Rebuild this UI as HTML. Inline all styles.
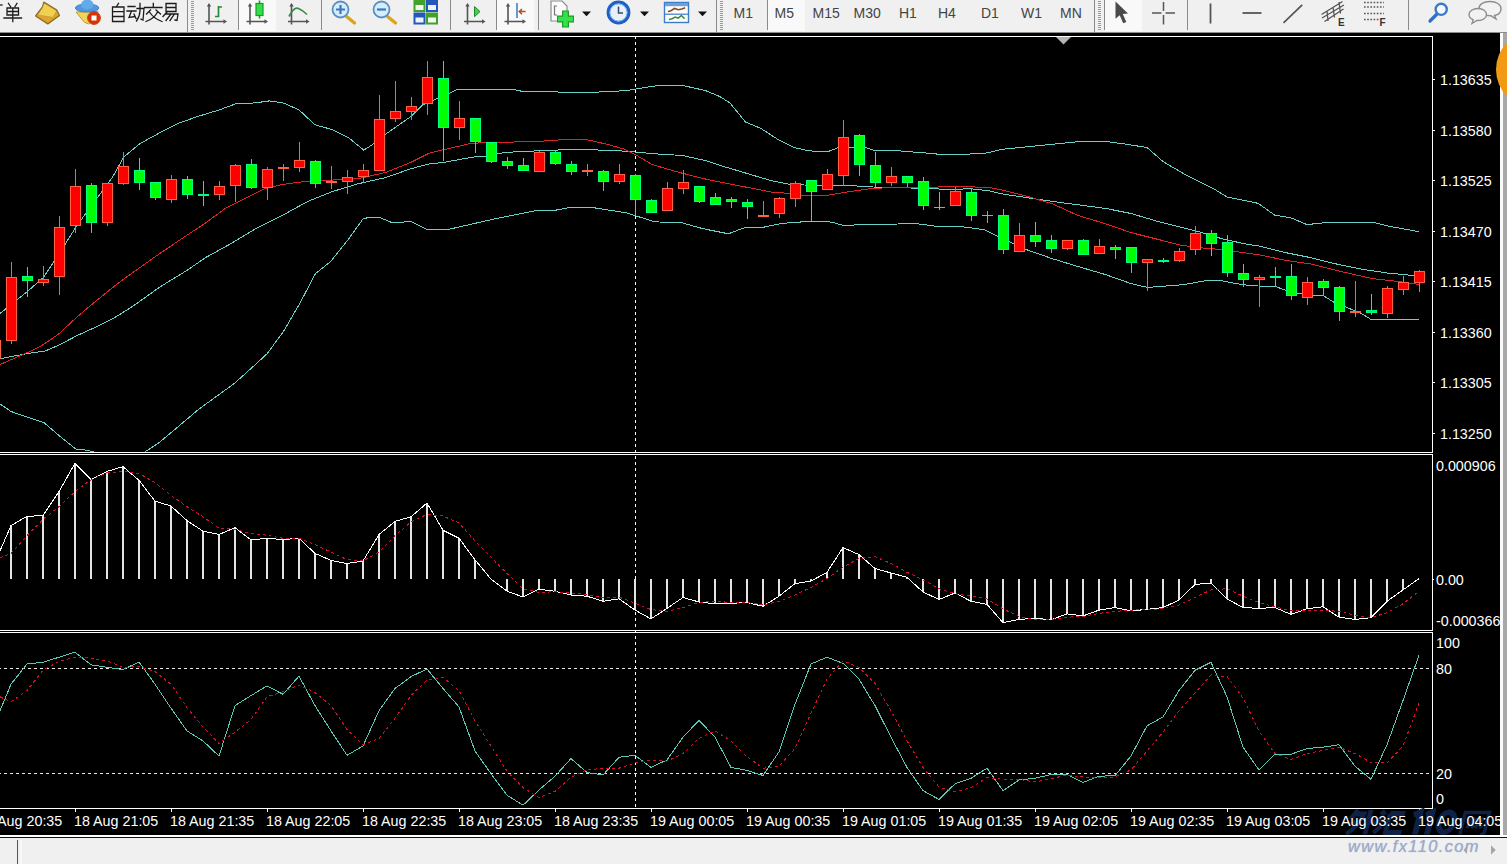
<!DOCTYPE html>
<html lang="en">
<head>
<meta charset="utf-8">
<title>MetaTrader chart - EURUSD M5</title>
<style>
html,body{margin:0;padding:0;}
body{width:1507px;height:864px;overflow:hidden;position:relative;background:#f0f0f0;font-family:"Liberation Sans",sans-serif;}
#root{position:absolute;left:0;top:0;width:1507px;height:864px;overflow:hidden;background:#f0f0f0;}
.lb{position:absolute;color:#fff;font-size:14.3px;line-height:16px;white-space:nowrap;font-family:"Liberation Sans",sans-serif;}
.tf{position:absolute;top:5px;color:#444;font-size:14px;line-height:16px;white-space:nowrap;font-family:"Liberation Sans",sans-serif;}
.el{position:absolute;color:#333;font-size:10px;font-weight:bold;line-height:10px;font-family:"Liberation Sans",sans-serif;}
#labels{position:absolute;left:0;top:0;width:1500px;height:835px;overflow:hidden;}
#status{position:absolute;left:0;top:838px;width:1507px;height:26px;background:#f0f0f0;}
#wm{position:absolute;left:1348px;top:836px;font-size:16.500px;line-height:20px;font-style:italic;color:#9eaac9;letter-spacing:1.35px;text-shadow:0 0 1px #a8b3cf;font-family:"Liberation Sans",sans-serif;white-space:nowrap;}
</style>
</head>
<body>
<div id="root">
<svg id="tb" width="1507" height="33" viewBox="0 0 1507 33" style="position:absolute;left:0;top:0">
<rect x="0" y="0" width="1507" height="32" fill="#f0f0f0"/>
<rect x="0" y="32" width="1507" height="1" fill="#8c8c8c"/>
<!-- pressed button backgrounds -->
<g fill="#f9f9f9">
<rect x="239" y="0" width="37" height="31"/>
<rect x="497" y="0" width="37" height="31"/>
<rect x="768" y="0" width="37" height="31"/>
<rect x="1105" y="0" width="37" height="31"/>
</g>
<!-- separators -->
<g fill="#8a8a8a" shape-rendering="crispEdges">
<rect x="187" y="0" width="1" height="32"/>
<rect x="238" y="0" width="1" height="30"/>
<rect x="321" y="0" width="1" height="30"/>
<rect x="450" y="0" width="1" height="30"/>
<rect x="496" y="0" width="1" height="30"/>
<rect x="538" y="0" width="1" height="30"/>
<rect x="716" y="0" width="1" height="32"/>
<rect x="767" y="0" width="1" height="30"/>
<rect x="1094" y="0" width="1" height="32"/>
<rect x="1104" y="0" width="1" height="30"/>
<rect x="1187" y="0" width="1" height="30"/>
<rect x="1408" y="0" width="1" height="30"/>
</g>
<!-- grips -->
<g stroke="#9a9a9a" stroke-width="3" stroke-dasharray="1,1" shape-rendering="crispEdges">
<line x1="192.5" y1="1" x2="192.5" y2="30"/>
<line x1="721.5" y1="1" x2="721.5" y2="30"/>
<line x1="1099.5" y1="1" x2="1099.5" y2="30"/>
</g>
<!-- chinese: 单 (partial) -->
<g fill="none" stroke="#1c1c1c" stroke-width="1.300" stroke-linecap="square">
<path d="M0 5h2"/>
<g transform="translate(4,3.5)">
<path d="M4.5 0l2 3M13 0l-2 3M3 4.5h11.500v7h-11.500zM3 8h11.500M0 14.500h17.500M8.800 4.500v13.500"/>
</g>
<!-- 自动交易 -->
<g transform="translate(109.500,3.500)">
<path d="M9 0l-2 3M3 3.500h11.500v14.500h-11.500zM3 8.200h11.500M3 13h11.500"/>
</g>
<g transform="translate(127,3.500)">
<path d="M1 3h7M0 7.500h9M4.500 7.500l-2.500 6.500 6-1M7 10.500l2 4.500M10 5h7l-1 11.500-2-.8M13 0v7.500q-.4 6-3.500 10"/>
</g>
<g transform="translate(144.500,3.500)">
<path d="M8.800 0v2.500M0 4h17.500M6 6.500l-4 4M11.500 6.500l4.500 4M13 8.500q-3 6.500-11.500 9.500M5 8.500q4 6.500 12.500 9.500"/>
</g>
<g transform="translate(162,3.500)">
<path d="M4 0h10v8h-10zM4 4h10M5.500 8l-4.500 5M4 10.500h12l-1 6.500-2-.5M9 10.500l-5 6.500M12.500 10.500l-4.500 6.500"/>
</g>
</g>
<!-- gold tag icon -->
<g>
<polygon points="43.800,2.100 56.800,10.100 59.500,15.400 47.800,23.900 35.600,15.900 42.500,6.900" fill="#c8962a" stroke="#8a6a22" stroke-width="1.200" stroke-linejoin="round"/>
<polygon points="44.300,3.400 56.300,11.100 52.600,17 38.200,14.800 42.800,7.400" fill="#f0d050"/>
<polygon points="38.200,15.200 52.600,17.400 56.600,11.600 58.300,15.300 47.800,22.600 36.800,15.800" fill="#dca62e"/>
</g>
<!-- autotrading icon -->
<g>
<polygon points="76,12 98.200,11.700 95,18 88.700,23.900 84.400,22.300" fill="#f3d25a" stroke="#c79a2e" stroke-width="1"/>
<ellipse cx="87.100" cy="8" rx="11.700" ry="4" fill="#4f9ade" stroke="#3b7cc4" stroke-width="1"/>
<ellipse cx="87.300" cy="4.500" rx="6.200" ry="5" fill="#62abe8"/>
<circle cx="94" cy="18" r="6.400" fill="#d8300e"/>
<circle cx="94" cy="18" r="6.400" fill="none" stroke="#c8460e" stroke-width="1"/>
<rect x="91.500" y="15.500" width="5" height="5" fill="#fff"/>
</g>
<!-- chart type icons: axes helper -->
<g stroke="#555" stroke-width="1.600" fill="#555">
<!-- bar -->
<path d="M209 4.500v20M205.500 21.500h19" fill="none"/>
<polygon points="209,3 206.800,6.500 211.200,6.500" stroke="none"/><polygon points="227,21.500 223.500,19.300 223.500,23.700" stroke="none"/>
<!-- candle -->
<path d="M250 4.500v20M246.500 21.500h19" fill="none"/>
<polygon points="250,3 247.800,6.500 252.200,6.500" stroke="none"/><polygon points="268,21.500 264.500,19.300 264.500,23.700" stroke="none"/>
<!-- line -->
<path d="M291.500 4.500v20M288 21.500h19" fill="none"/>
<polygon points="291.500,3 289.300,6.500 293.700,6.500" stroke="none"/><polygon points="309.500,21.500 306,19.300 306,23.700" stroke="none"/>
<!-- autoscroll -->
<path d="M467.500 4.500v20M464 21.500h19" fill="none"/>
<polygon points="467.500,3 465.300,6.500 469.700,6.500" stroke="none"/><polygon points="485.500,21.500 482,19.300 482,23.700" stroke="none"/>
<!-- shift -->
<path d="M508 4.500v20M504.500 21.500h19" fill="none"/>
<polygon points="508,3 505.800,6.500 510.200,6.500" stroke="none"/><polygon points="526,21.500 522.500,19.300 522.500,23.700" stroke="none"/>
</g>
<path d="M215 16.500h3.500v-10.500M218.500 7h3.500" fill="none" stroke="#2a8a3c" stroke-width="1.700"/>
<path d="M259.500 .5v18" stroke="#1c9a2c" stroke-width="1.600"/>
<rect x="256" y="3.500" width="7" height="12" fill="#34e04a" stroke="#1c9a2c" stroke-width="1.200"/>
<path d="M289 16.500q5 -10 9.500 -8t8.500 6" fill="none" stroke="#3a8a4c" stroke-width="1.700"/>
<polygon points="474.500,6.500 480,11.600 474.500,16.700" fill="#3bd44a" stroke="#238a30" stroke-width="1"/>
<path d="M517 3v15" stroke="#3a84c8" stroke-width="1.600"/>
<path d="M525.500 11.600h-6M522 9l-2.800 2.600 2.800 2.600" fill="none" stroke="#c04a18" stroke-width="1.500"/>
<!-- zoom in / out -->
<g>
<path d="M346.500 16.500l8 6.500" stroke="#d9a520" stroke-width="3.400" stroke-linecap="round"/>
<circle cx="340.500" cy="9.500" r="8" fill="#d6ecfa" stroke="#5b8fc2" stroke-width="1.800"/>
<path d="M336 9.500h9M340.500 5v9" stroke="#3a78bc" stroke-width="2.200"/>
<path d="M387.500 16.500l8 6.500" stroke="#d9a520" stroke-width="3.400" stroke-linecap="round"/>
<circle cx="381.500" cy="9.500" r="8" fill="#d6ecfa" stroke="#5b8fc2" stroke-width="1.800"/>
<path d="M377 9.500h9" stroke="#3a78bc" stroke-width="2.200"/>
</g>
<!-- tile windows -->
<g>
<rect x="413.500" y="0" width="12" height="12" fill="#3fa22a"/><rect x="426" y="0" width="12" height="12" fill="#2357b8"/>
<rect x="413.500" y="12.500" width="12" height="12" fill="#2357b8"/><rect x="426" y="12.500" width="12" height="12" fill="#3fa22a"/>
<rect x="415.500" y="5" width="8" height="5" fill="#f4f8ee"/><rect x="428" y="5" width="8" height="5" fill="#eef2fb"/>
<rect x="415.500" y="17.500" width="8" height="5" fill="#eef2fb"/><rect x="428" y="17.500" width="8" height="5" fill="#f4f8ee"/>
</g>
<!-- new chart doc+plus -->
<g>
<path d="M551 1h11l5 5v15h-16z" fill="#fbfbfb" stroke="#8c8c8c" stroke-width="1.200"/>
<path d="M557 6h-2.500v9h2.500" fill="none" stroke="#777" stroke-width="1.200"/>
<path d="M565.500 10.500v17M557 19h17" stroke="#1f9a2a" stroke-width="7"/>
<path d="M565.500 11.500v15M558 19h15" stroke="#35e04a" stroke-width="4.600"/>
</g>
<g fill="#111">
<polygon points="582,11.500 591,11.500 586.500,16.200"/>
<polygon points="640,11.500 649,11.500 644.500,16.200"/>
<polygon points="698,11.500 707,11.500 702.500,16.200"/>
</g>
<!-- clock -->
<g>
<circle cx="618.500" cy="12.500" r="10.400" fill="#e8f1fb" stroke="#1e5fc0" stroke-width="3"/>
<circle cx="618.500" cy="12.500" r="8.600" fill="none" stroke="#6aa6ec" stroke-width="1"/>
<path d="M618.500 6.500v6.500h4.500" fill="none" stroke="#3a4a60" stroke-width="1.500"/>
</g>
<!-- template icon -->
<g>
<rect x="664.500" y="2.500" width="24" height="20" fill="#fdfdfd" stroke="#3d7cc8" stroke-width="1.400"/>
<rect x="665" y="3" width="23" height="3.200" fill="#6aa0dc"/>
<path d="M665 14.200h23" stroke="#3d7cc8" stroke-width="1.200"/>
<path d="M668 11.500l3-.8 3.500-2.300 3.800 1.300 3.600-.7 3.200-1.300" fill="none" stroke="#8a4a1c" stroke-width="1.600"/>
<path d="M669 19.500l3.200-.8 3-1.600 3 1 3.200-2.600 3.200 3.200" fill="none" stroke="#3a8a3a" stroke-width="1.500"/>
</g>
<!-- cursor -->
<polygon points="1115.500,1.500 1115.500,18.800 1119.700,15.300 1123.200,23.300 1126.300,22 1122.800,14 1128,13.400" fill="#4a4a4a"/>
<!-- crosshair -->
<path d="M1163.500 2v9M1163.500 15v9.500M1152 13h9.500M1165.500 13h9.500" stroke="#555" stroke-width="1.500" fill="none"/>
<!-- vline hline trendline -->
<path d="M1210.500 3.500v20" stroke="#555" stroke-width="1.800"/>
<path d="M1242.500 13h19" stroke="#555" stroke-width="1.800"/>
<path d="M1283.500 22.800l18.700-18" stroke="#555" stroke-width="1.700"/>
<!-- channel E -->
<g stroke="#555" stroke-width="1.300" fill="none">
<path d="M1321.500 14.500l21-13M1324.500 21.500l19-12.500M1327 11l1 10M1333 7l1.500 10.500M1339 2l1.500 11.500M1322 18l22-13"/>
</g>
<!-- fibo F -->
<g stroke="#555" stroke-width="1.400" stroke-dasharray="1.600,1.600">
<path d="M1364 2.500h20M1364 7h20M1364 13.500h20M1364 19.500h15"/>
</g>
<!-- blue magnifier -->
<path d="M1437 14l-7 7" stroke="#2f6fc4" stroke-width="3.200" stroke-linecap="round"/>
<circle cx="1441.200" cy="9.300" r="5.600" fill="#f4f8fd" stroke="#3a7acc" stroke-width="2.400"/>
<!-- speech bubbles -->
<g fill="#f2f2f2" stroke="#8e8e8e" stroke-width="1.400">
<path d="M1490 1.500c6.500 0 11 3 11 7.200s-3 6-6.500 6.800l1.500 3.500-5-3.200c-7 0-12-2.500-12-7.100s4.500-7.200 11-7.200z"/>
<path d="M1478 8.500c5 0 8.500 2.600 8.500 6s-3.500 6-8.500 6l-1.200 0-4.800 3 1.200-3.800c-2.400-1-4.200-2.800-4.200-5.200 0-3.400 4-6 9-6z"/>
</g>
</svg>

<div class="tf" style="left:733.500px">M1</div>
<div class="tf" style="left:774.500px">M5</div>
<div class="tf" style="left:812.500px">M15</div>
<div class="tf" style="left:853.500px">M30</div>
<div class="tf" style="left:899px">H1</div>
<div class="tf" style="left:938px">H4</div>
<div class="tf" style="left:981px">D1</div>
<div class="tf" style="left:1021px">W1</div>
<div class="tf" style="left:1060px">MN</div>
<div class="el" style="left:1338px;top:17.500px">E</div>
<div class="el" style="left:1379.500px;top:17.500px">F</div>
<svg id="chart" width="1507" height="864" viewBox="0 0 1507 864" style="position:absolute;left:0;top:0">
<rect x="0" y="33" width="1500" height="802" fill="#000"/>
<defs><clipPath id="cm"><rect x="0" y="37" width="1432" height="415"/></clipPath><clipPath id="c2"><rect x="0" y="455" width="1432" height="175"/></clipPath><clipPath id="c3"><rect x="0" y="633" width="1432" height="175"/></clipPath></defs>
<g fill="#fff" shape-rendering="crispEdges">
<rect x="0" y="36" width="1433" height="1"/>
<rect x="1432" y="36" width="1" height="417"/>
<rect x="0" y="452" width="1433" height="1"/>
<rect x="0" y="454" width="1433" height="1"/>
<rect x="1432" y="454" width="1" height="177"/>
<rect x="0" y="630" width="1433" height="1"/>
<rect x="0" y="632" width="1433" height="1"/>
<rect x="1432" y="632" width="1" height="177"/>
<rect x="0" y="808" width="1433" height="1"/>
<rect x="1433" y="79" width="2" height="1"/>
<rect x="1433" y="130" width="2" height="1"/>
<rect x="1433" y="180" width="2" height="1"/>
<rect x="1433" y="231" width="2" height="1"/>
<rect x="1433" y="281" width="2" height="1"/>
<rect x="1433" y="332" width="2" height="1"/>
<rect x="1433" y="382" width="2" height="1"/>
<rect x="1433" y="433" width="2" height="1"/>
<rect x="1433" y="579" width="1" height="1"/>
<rect x="75" y="809" width="1" height="3"/>
<rect x="171" y="809" width="1" height="3"/>
<rect x="267" y="809" width="1" height="3"/>
<rect x="363" y="809" width="1" height="3"/>
<rect x="459" y="809" width="1" height="3"/>
<rect x="555" y="809" width="1" height="3"/>
<rect x="651" y="809" width="1" height="3"/>
<rect x="747" y="809" width="1" height="3"/>
<rect x="843" y="809" width="1" height="3"/>
<rect x="939" y="809" width="1" height="3"/>
<rect x="1035" y="809" width="1" height="3"/>
<rect x="1131" y="809" width="1" height="3"/>
<rect x="1227" y="809" width="1" height="3"/>
<rect x="1323" y="809" width="1" height="3"/>
<rect x="1419" y="809" width="1" height="3"/>
</g>
<polygon points="1056,37 1071,37 1063.5,44.5" fill="#b4b4b4"/>
<line x1="635.5" y1="36" x2="635.5" y2="808" stroke="#fff" stroke-width="1" stroke-dasharray="3,3" shape-rendering="crispEdges"/>
<g transform="translate(1349,810) skewX(-14)" fill="none" stroke="#0f2146" stroke-width="4.800" stroke-linecap="butt" stroke-linejoin="miter">
<path d="M9 0l-5 9M8 4h8q-3 13-13 20M6 11l6 6M22 0v24.500M22 9l8 5"/>
<g transform="translate(29,0)"><path d="M4 1l4 4M2 8l4 4M1 23l6-7M13 3.500h15M13 3.500v19h16"/></g>
<g transform="translate(66,0)"><path d="M0 5l6-3v22.500" stroke-width="6"/></g>
<g transform="translate(78,0)"><path d="M0 5l6-3v22.500" stroke-width="6"/></g>
<g transform="translate(90,0)"><ellipse cx="10.500" cy="12.300" rx="7.500" ry="10" stroke-width="5.500"/></g>
<g transform="translate(115,0)"><path d="M2 24.500v-22h24v19q0 3-4 3M7 8l7 10M14 8l-7 10M15 8l7 10M22 8l-7 10" stroke-width="3.600"/></g>
</g>
<g clip-path="url(#cm)" fill="none" stroke-width="1" shape-rendering="crispEdges">
<polyline points="0.0,313.5 27.5,291.4 43.5,277.4 58.6,254.5 76.4,226.4 96.8,198.4 112.0,178.0 124.0,156.8 139.8,143.7 159.7,132.8 179.6,122.8 199.5,115.9 219.4,109.9 235.4,103.9 255.3,102.9 269.2,100.9 283.1,102.9 299.0,109.9 315.0,124.8 332.9,129.8 348.8,137.8 363.8,150.2 372.7,144.5 385.5,134.3 411.0,116.4 422.4,105.0 449.0,93.5 458.0,89.2 513.0,89.2 520.5,91.0 540.0,91.0 565.5,92.4 591.0,92.4 626.6,90.6 654.6,86.0 682.7,85.5 705.6,90.6 720.0,96.6 730.0,103.0 745.5,122.0 760.8,128.4 778.6,139.9 793.9,147.5 809.0,150.8 827.0,152.0 838.5,147.5 865.0,147.5 873.0,150.0 898.0,150.8 925.5,153.0 940.8,154.4 963.7,154.4 986.6,153.0 1002.0,149.3 1040.0,145.5 1083.0,141.2 1104.0,141.2 1124.0,143.9 1147.0,147.5 1163.0,161.5 1186.0,175.1 1213.0,188.3 1227.0,197.0 1258.0,203.3 1275.0,215.3 1290.6,217.7 1307.0,224.6 1331.0,222.0 1372.0,222.0 1387.4,225.9 1419.0,231.7" stroke="#68d2ca"/>
<polyline points="0.0,358.7 30.0,353.1 40.0,351.8 44.6,351.3 58.5,345.3 77.0,335.6 95.6,327.2 114.0,318.0 132.6,306.4 160.0,286.9 187.6,270.0 205.5,257.6 231.0,243.6 256.4,228.3 282.0,215.6 307.4,201.6 332.9,191.4 358.0,183.8 385.5,177.6 411.0,168.7 428.8,164.0 444.0,162.3 472.0,157.2 487.0,156.0 497.6,153.4 513.0,152.0 538.0,150.8 565.5,149.7 591.0,149.7 626.6,151.2 654.6,153.8 682.7,155.5 705.6,160.6 720.0,165.4 745.5,173.0 771.0,180.6 790.0,184.5 804.0,185.0 832.0,185.7 852.5,185.7 873.0,187.0 898.0,187.5 930.6,188.8 951.0,189.3 971.0,188.8 989.0,190.8 1002.0,193.9 1027.4,197.7 1053.0,201.5 1078.0,204.8 1105.5,208.4 1131.0,213.5 1156.4,221.0 1182.0,227.5 1202.0,232.6 1222.7,239.0 1245.6,244.0 1260.0,246.2 1285.5,252.6 1311.0,257.7 1336.4,264.0 1362.0,269.2 1387.4,273.0 1413.0,275.5 1419.0,275.5" stroke="#68d2ca"/>
<polyline points="0.0,403.9 11.0,411.5 27.0,417.0 43.8,422.5 59.0,435.5 75.6,449.0 87.6,450.3 93.0,451.7 100.0,454.0 140.0,455.0 145.3,451.7 159.3,442.4 174.0,430.2 199.0,409.0 234.2,383.6 251.0,368.5 267.3,353.5 283.8,330.9 300.4,302.3 315.4,273.7 330.5,261.7 348.5,239.1 363.6,218.1 380.0,217.6 393.0,223.0 411.0,221.4 427.5,229.8 446.6,229.8 472.0,224.0 497.6,218.3 538.0,210.3 555.0,210.3 570.6,207.3 591.0,207.3 626.6,212.9 654.6,221.8 682.7,223.0 703.0,228.7 728.5,233.8 745.5,227.3 760.8,227.8 778.6,224.0 793.9,222.2 822.0,221.4 832.0,222.2 842.3,225.2 873.0,224.7 898.0,224.0 912.7,223.2 938.0,226.5 963.7,227.0 984.0,229.6 996.8,235.9 1027.4,250.0 1053.0,258.9 1078.0,266.5 1105.5,274.6 1131.0,283.6 1147.5,287.4 1182.0,284.8 1207.4,280.5 1222.7,281.0 1243.0,284.8 1258.0,286.0 1275.3,286.5 1290.6,292.0 1307.0,294.6 1323.7,295.9 1334.0,302.3 1346.6,307.4 1362.0,313.8 1371.0,319.4 1419.0,319.4" stroke="#68d2ca"/>
<polyline points="0.0,364.5 32.4,350.4 40.0,346.7 58.5,334.2 77.0,317.0 95.6,301.3 114.0,286.5 122.4,280.0 152.9,258.3 180.0,239.8 205.5,223.0 225.9,208.0 243.7,199.0 264.0,188.9 282.0,184.5 307.4,181.2 332.9,180.0 358.0,178.7 385.5,172.5 411.0,162.3 428.8,153.4 444.0,149.6 472.0,143.2 497.6,142.4 538.0,141.4 565.5,139.5 585.9,139.5 606.0,144.0 624.0,149.0 636.8,155.5 652.0,164.5 677.6,172.0 703.0,178.5 720.0,182.0 745.5,187.0 771.0,192.0 788.8,193.4 806.6,196.0 827.0,195.4 847.4,192.0 873.0,188.3 898.0,187.5 930.6,187.5 951.0,186.2 989.0,187.5 1002.0,190.0 1027.4,196.4 1053.0,204.0 1078.0,215.5 1105.5,223.7 1131.0,232.6 1156.4,239.0 1182.0,245.4 1202.0,247.9 1222.7,249.7 1245.6,253.0 1260.0,255.0 1285.5,260.3 1311.0,264.0 1336.4,270.4 1362.0,276.3 1374.6,278.9 1397.6,281.4 1419.0,284.5" stroke="#dc2428"/>
</g>
<g clip-path="url(#cm)" shape-rendering="crispEdges">
<rect x="-5" y="339" width="1" height="20" fill="#ff6347"/>
<rect x="-10" y="340" width="11" height="19" fill="#ff6347"/>
<rect x="-9" y="341" width="9" height="17" fill="#ff0000"/>
<rect x="11" y="262" width="1" height="82" fill="#ff6347"/>
<rect x="6" y="277" width="11" height="64" fill="#ff6347"/>
<rect x="7" y="278" width="9" height="62" fill="#ff0000"/>
<rect x="27" y="267" width="1" height="30" fill="#00ff7f"/>
<rect x="22" y="276" width="11" height="5" fill="#00ff7f"/>
<rect x="23" y="277" width="9" height="3" fill="#00ff00"/>
<rect x="43" y="266" width="1" height="20" fill="#ff6347"/>
<rect x="38" y="279" width="11" height="4" fill="#ff6347"/>
<rect x="39" y="280" width="9" height="2" fill="#ff0000"/>
<rect x="59" y="216" width="1" height="79" fill="#ff6347"/>
<rect x="54" y="227" width="11" height="50" fill="#ff6347"/>
<rect x="55" y="228" width="9" height="48" fill="#ff0000"/>
<rect x="75" y="169" width="1" height="64" fill="#ff6347"/>
<rect x="70" y="186" width="11" height="40" fill="#ff6347"/>
<rect x="71" y="187" width="9" height="38" fill="#ff0000"/>
<rect x="91" y="183" width="1" height="50" fill="#00ff7f"/>
<rect x="86" y="185" width="11" height="38" fill="#00ff7f"/>
<rect x="87" y="186" width="9" height="36" fill="#00ff00"/>
<rect x="107" y="183" width="1" height="43" fill="#ff6347"/>
<rect x="102" y="183" width="11" height="40" fill="#ff6347"/>
<rect x="103" y="184" width="9" height="38" fill="#ff0000"/>
<rect x="123" y="152" width="1" height="33" fill="#ff6347"/>
<rect x="118" y="166" width="11" height="18" fill="#ff6347"/>
<rect x="119" y="167" width="9" height="16" fill="#ff0000"/>
<rect x="139" y="158" width="1" height="32" fill="#00ff7f"/>
<rect x="134" y="170" width="11" height="13" fill="#00ff7f"/>
<rect x="135" y="171" width="9" height="11" fill="#00ff00"/>
<rect x="155" y="182" width="1" height="18" fill="#00ff7f"/>
<rect x="150" y="182" width="11" height="16" fill="#00ff7f"/>
<rect x="151" y="183" width="9" height="14" fill="#00ff00"/>
<rect x="171" y="175" width="1" height="28" fill="#ff6347"/>
<rect x="166" y="179" width="11" height="21" fill="#ff6347"/>
<rect x="167" y="180" width="9" height="19" fill="#ff0000"/>
<rect x="187" y="176" width="1" height="23" fill="#00ff7f"/>
<rect x="182" y="179" width="11" height="16" fill="#00ff7f"/>
<rect x="183" y="180" width="9" height="14" fill="#00ff00"/>
<rect x="203" y="181" width="1" height="25" fill="#00ff7f"/>
<rect x="198" y="194" width="11" height="2" fill="#00ff7f"/>
<rect x="219" y="181" width="1" height="19" fill="#ff6347"/>
<rect x="214" y="186" width="11" height="9" fill="#ff6347"/>
<rect x="215" y="187" width="9" height="7" fill="#ff0000"/>
<rect x="235" y="164" width="1" height="38" fill="#ff6347"/>
<rect x="230" y="165" width="11" height="21" fill="#ff6347"/>
<rect x="231" y="166" width="9" height="19" fill="#ff0000"/>
<rect x="251" y="159" width="1" height="30" fill="#00ff7f"/>
<rect x="246" y="164" width="11" height="24" fill="#00ff7f"/>
<rect x="247" y="165" width="9" height="22" fill="#00ff00"/>
<rect x="267" y="167" width="1" height="33" fill="#ff6347"/>
<rect x="262" y="169" width="11" height="19" fill="#ff6347"/>
<rect x="263" y="170" width="9" height="17" fill="#ff0000"/>
<rect x="283" y="164" width="1" height="17" fill="#ff6347"/>
<rect x="278" y="167" width="11" height="2" fill="#ff6347"/>
<rect x="299" y="142" width="1" height="30" fill="#ff6347"/>
<rect x="294" y="160" width="11" height="8" fill="#ff6347"/>
<rect x="295" y="161" width="9" height="6" fill="#ff0000"/>
<rect x="315" y="160" width="1" height="28" fill="#00ff7f"/>
<rect x="310" y="161" width="11" height="23" fill="#00ff7f"/>
<rect x="311" y="162" width="9" height="21" fill="#00ff00"/>
<rect x="331" y="166" width="1" height="23" fill="#ff6347"/>
<rect x="326" y="181" width="11" height="2" fill="#ff6347"/>
<rect x="347" y="170" width="1" height="24" fill="#ff6347"/>
<rect x="342" y="177" width="11" height="5" fill="#ff6347"/>
<rect x="343" y="178" width="9" height="3" fill="#ff0000"/>
<rect x="363" y="164" width="1" height="18" fill="#ff6347"/>
<rect x="358" y="170" width="11" height="7" fill="#ff6347"/>
<rect x="359" y="171" width="9" height="5" fill="#ff0000"/>
<rect x="379" y="95" width="1" height="76" fill="#ff6347"/>
<rect x="374" y="119" width="11" height="52" fill="#ff6347"/>
<rect x="375" y="120" width="9" height="50" fill="#ff0000"/>
<rect x="395" y="81" width="1" height="41" fill="#ff6347"/>
<rect x="390" y="111" width="11" height="8" fill="#ff6347"/>
<rect x="391" y="112" width="9" height="6" fill="#ff0000"/>
<rect x="411" y="97" width="1" height="23" fill="#ff6347"/>
<rect x="406" y="106" width="11" height="6" fill="#ff6347"/>
<rect x="407" y="107" width="9" height="4" fill="#ff0000"/>
<rect x="427" y="61" width="1" height="54" fill="#ff6347"/>
<rect x="422" y="77" width="11" height="27" fill="#ff6347"/>
<rect x="423" y="78" width="9" height="25" fill="#ff0000"/>
<rect x="443" y="61" width="1" height="100" fill="#00ff7f"/>
<rect x="438" y="78" width="11" height="50" fill="#00ff7f"/>
<rect x="439" y="79" width="9" height="48" fill="#00ff00"/>
<rect x="459" y="101" width="1" height="39" fill="#ff6347"/>
<rect x="454" y="118" width="11" height="10" fill="#ff6347"/>
<rect x="455" y="119" width="9" height="8" fill="#ff0000"/>
<rect x="475" y="118" width="1" height="35" fill="#00ff7f"/>
<rect x="470" y="118" width="11" height="24" fill="#00ff7f"/>
<rect x="471" y="119" width="9" height="22" fill="#00ff00"/>
<rect x="491" y="142" width="1" height="21" fill="#00ff7f"/>
<rect x="486" y="142" width="11" height="20" fill="#00ff7f"/>
<rect x="487" y="143" width="9" height="18" fill="#00ff00"/>
<rect x="507" y="157" width="1" height="12" fill="#00ff7f"/>
<rect x="502" y="161" width="11" height="5" fill="#00ff7f"/>
<rect x="503" y="162" width="9" height="3" fill="#00ff00"/>
<rect x="523" y="158" width="1" height="13" fill="#00ff7f"/>
<rect x="518" y="165" width="11" height="6" fill="#00ff7f"/>
<rect x="519" y="166" width="9" height="4" fill="#00ff00"/>
<rect x="539" y="151" width="1" height="21" fill="#ff6347"/>
<rect x="534" y="152" width="11" height="20" fill="#ff6347"/>
<rect x="535" y="153" width="9" height="18" fill="#ff0000"/>
<rect x="555" y="151" width="1" height="14" fill="#00ff7f"/>
<rect x="550" y="152" width="11" height="12" fill="#00ff7f"/>
<rect x="551" y="153" width="9" height="10" fill="#00ff00"/>
<rect x="571" y="161" width="1" height="14" fill="#00ff7f"/>
<rect x="566" y="164" width="11" height="8" fill="#00ff7f"/>
<rect x="567" y="165" width="9" height="6" fill="#00ff00"/>
<rect x="587" y="164" width="1" height="12" fill="#ff6347"/>
<rect x="582" y="170" width="11" height="2" fill="#ff6347"/>
<rect x="603" y="170" width="1" height="21" fill="#00ff7f"/>
<rect x="598" y="171" width="11" height="11" fill="#00ff7f"/>
<rect x="599" y="172" width="9" height="9" fill="#00ff00"/>
<rect x="619" y="164" width="1" height="20" fill="#ff6347"/>
<rect x="614" y="174" width="11" height="8" fill="#ff6347"/>
<rect x="615" y="175" width="9" height="6" fill="#ff0000"/>
<rect x="635" y="174" width="1" height="41" fill="#00ff7f"/>
<rect x="630" y="175" width="11" height="25" fill="#00ff7f"/>
<rect x="631" y="176" width="9" height="23" fill="#00ff00"/>
<rect x="651" y="199" width="1" height="14" fill="#00ff7f"/>
<rect x="646" y="200" width="11" height="13" fill="#00ff7f"/>
<rect x="647" y="201" width="9" height="11" fill="#00ff00"/>
<rect x="667" y="182" width="1" height="29" fill="#ff6347"/>
<rect x="662" y="188" width="11" height="23" fill="#ff6347"/>
<rect x="663" y="189" width="9" height="21" fill="#ff0000"/>
<rect x="683" y="170" width="1" height="24" fill="#ff6347"/>
<rect x="678" y="182" width="11" height="7" fill="#ff6347"/>
<rect x="679" y="183" width="9" height="5" fill="#ff0000"/>
<rect x="699" y="186" width="1" height="17" fill="#00ff7f"/>
<rect x="694" y="186" width="11" height="16" fill="#00ff7f"/>
<rect x="695" y="187" width="9" height="14" fill="#00ff00"/>
<rect x="715" y="193" width="1" height="12" fill="#00ff7f"/>
<rect x="710" y="197" width="11" height="8" fill="#00ff7f"/>
<rect x="711" y="198" width="9" height="6" fill="#00ff00"/>
<rect x="731" y="197" width="1" height="11" fill="#00ff7f"/>
<rect x="726" y="199" width="11" height="3" fill="#00ff7f"/>
<rect x="727" y="200" width="9" height="1" fill="#00ff00"/>
<rect x="747" y="199" width="1" height="20" fill="#00ff7f"/>
<rect x="742" y="202" width="11" height="5" fill="#00ff7f"/>
<rect x="743" y="203" width="9" height="3" fill="#00ff00"/>
<rect x="763" y="201" width="1" height="16" fill="#ff6347"/>
<rect x="758" y="215" width="11" height="2" fill="#ff6347"/>
<rect x="779" y="197" width="1" height="21" fill="#ff6347"/>
<rect x="774" y="198" width="11" height="16" fill="#ff6347"/>
<rect x="775" y="199" width="9" height="14" fill="#ff0000"/>
<rect x="795" y="181" width="1" height="26" fill="#ff6347"/>
<rect x="790" y="183" width="11" height="16" fill="#ff6347"/>
<rect x="791" y="184" width="9" height="14" fill="#ff0000"/>
<rect x="811" y="180" width="1" height="41" fill="#00ff7f"/>
<rect x="806" y="180" width="11" height="12" fill="#00ff7f"/>
<rect x="807" y="181" width="9" height="10" fill="#00ff00"/>
<rect x="827" y="169" width="1" height="21" fill="#ff6347"/>
<rect x="822" y="174" width="11" height="16" fill="#ff6347"/>
<rect x="823" y="175" width="9" height="14" fill="#ff0000"/>
<rect x="843" y="120" width="1" height="66" fill="#ff6347"/>
<rect x="838" y="137" width="11" height="39" fill="#ff6347"/>
<rect x="839" y="138" width="9" height="37" fill="#ff0000"/>
<rect x="859" y="134" width="1" height="42" fill="#00ff7f"/>
<rect x="854" y="135" width="11" height="30" fill="#00ff7f"/>
<rect x="855" y="136" width="9" height="28" fill="#00ff00"/>
<rect x="875" y="152" width="1" height="35" fill="#00ff7f"/>
<rect x="870" y="165" width="11" height="18" fill="#00ff7f"/>
<rect x="871" y="166" width="9" height="16" fill="#00ff00"/>
<rect x="891" y="167" width="1" height="19" fill="#ff6347"/>
<rect x="886" y="176" width="11" height="7" fill="#ff6347"/>
<rect x="887" y="177" width="9" height="5" fill="#ff0000"/>
<rect x="907" y="176" width="1" height="11" fill="#00ff7f"/>
<rect x="902" y="176" width="11" height="7" fill="#00ff7f"/>
<rect x="903" y="177" width="9" height="5" fill="#00ff00"/>
<rect x="923" y="177" width="1" height="33" fill="#00ff7f"/>
<rect x="918" y="181" width="11" height="25" fill="#00ff7f"/>
<rect x="919" y="182" width="9" height="23" fill="#00ff00"/>
<rect x="939" y="192" width="1" height="18" fill="#00ff7f"/>
<rect x="934" y="207" width="11" height="1" fill="#00ff7f"/>
<rect x="955" y="187" width="1" height="19" fill="#ff6347"/>
<rect x="950" y="191" width="11" height="15" fill="#ff6347"/>
<rect x="951" y="192" width="9" height="13" fill="#ff0000"/>
<rect x="971" y="188" width="1" height="33" fill="#00ff7f"/>
<rect x="966" y="192" width="11" height="24" fill="#00ff7f"/>
<rect x="967" y="193" width="9" height="22" fill="#00ff00"/>
<rect x="987" y="211" width="1" height="12" fill="#00ff7f"/>
<rect x="982" y="215" width="11" height="1" fill="#00ff7f"/>
<rect x="1003" y="209" width="1" height="45" fill="#00ff7f"/>
<rect x="998" y="215" width="11" height="35" fill="#00ff7f"/>
<rect x="999" y="216" width="9" height="33" fill="#00ff00"/>
<rect x="1019" y="223" width="1" height="29" fill="#ff6347"/>
<rect x="1014" y="235" width="11" height="17" fill="#ff6347"/>
<rect x="1015" y="236" width="9" height="15" fill="#ff0000"/>
<rect x="1035" y="222" width="1" height="25" fill="#00ff7f"/>
<rect x="1030" y="235" width="11" height="7" fill="#00ff7f"/>
<rect x="1031" y="236" width="9" height="5" fill="#00ff00"/>
<rect x="1051" y="235" width="1" height="18" fill="#00ff7f"/>
<rect x="1046" y="240" width="11" height="9" fill="#00ff7f"/>
<rect x="1047" y="241" width="9" height="7" fill="#00ff00"/>
<rect x="1067" y="240" width="1" height="10" fill="#ff6347"/>
<rect x="1062" y="240" width="11" height="9" fill="#ff6347"/>
<rect x="1063" y="241" width="9" height="7" fill="#ff0000"/>
<rect x="1083" y="239" width="1" height="16" fill="#00ff7f"/>
<rect x="1078" y="240" width="11" height="15" fill="#00ff7f"/>
<rect x="1079" y="241" width="9" height="13" fill="#00ff00"/>
<rect x="1099" y="239" width="1" height="15" fill="#ff6347"/>
<rect x="1094" y="246" width="11" height="8" fill="#ff6347"/>
<rect x="1095" y="247" width="9" height="6" fill="#ff0000"/>
<rect x="1115" y="245" width="1" height="14" fill="#00ff7f"/>
<rect x="1110" y="247" width="11" height="3" fill="#00ff7f"/>
<rect x="1111" y="248" width="9" height="1" fill="#00ff00"/>
<rect x="1131" y="247" width="1" height="26" fill="#00ff7f"/>
<rect x="1126" y="247" width="11" height="16" fill="#00ff7f"/>
<rect x="1127" y="248" width="9" height="14" fill="#00ff00"/>
<rect x="1147" y="259" width="1" height="32" fill="#ff6347"/>
<rect x="1142" y="259" width="11" height="4" fill="#ff6347"/>
<rect x="1143" y="260" width="9" height="2" fill="#ff0000"/>
<rect x="1163" y="258" width="1" height="5" fill="#00ff7f"/>
<rect x="1158" y="260" width="11" height="2" fill="#00ff7f"/>
<rect x="1179" y="248" width="1" height="14" fill="#ff6347"/>
<rect x="1174" y="251" width="11" height="10" fill="#ff6347"/>
<rect x="1175" y="252" width="9" height="8" fill="#ff0000"/>
<rect x="1195" y="226" width="1" height="29" fill="#ff6347"/>
<rect x="1190" y="233" width="11" height="17" fill="#ff6347"/>
<rect x="1191" y="234" width="9" height="15" fill="#ff0000"/>
<rect x="1211" y="230" width="1" height="26" fill="#00ff7f"/>
<rect x="1206" y="233" width="11" height="11" fill="#00ff7f"/>
<rect x="1207" y="234" width="9" height="9" fill="#00ff00"/>
<rect x="1227" y="235" width="1" height="42" fill="#00ff7f"/>
<rect x="1222" y="242" width="11" height="31" fill="#00ff7f"/>
<rect x="1223" y="243" width="9" height="29" fill="#00ff00"/>
<rect x="1243" y="264" width="1" height="23" fill="#00ff7f"/>
<rect x="1238" y="273" width="11" height="7" fill="#00ff7f"/>
<rect x="1239" y="274" width="9" height="5" fill="#00ff00"/>
<rect x="1259" y="275" width="1" height="32" fill="#ff6347"/>
<rect x="1254" y="277" width="11" height="3" fill="#ff6347"/>
<rect x="1255" y="278" width="9" height="1" fill="#ff0000"/>
<rect x="1275" y="267" width="1" height="20" fill="#00ff7f"/>
<rect x="1270" y="276" width="11" height="2" fill="#00ff7f"/>
<rect x="1291" y="264" width="1" height="36" fill="#00ff7f"/>
<rect x="1286" y="276" width="11" height="20" fill="#00ff7f"/>
<rect x="1287" y="277" width="9" height="18" fill="#00ff00"/>
<rect x="1307" y="277" width="1" height="28" fill="#ff6347"/>
<rect x="1302" y="282" width="11" height="16" fill="#ff6347"/>
<rect x="1303" y="283" width="9" height="14" fill="#ff0000"/>
<rect x="1323" y="279" width="1" height="17" fill="#00ff7f"/>
<rect x="1318" y="281" width="11" height="7" fill="#00ff7f"/>
<rect x="1319" y="282" width="9" height="5" fill="#00ff00"/>
<rect x="1339" y="286" width="1" height="35" fill="#00ff7f"/>
<rect x="1334" y="287" width="11" height="25" fill="#00ff7f"/>
<rect x="1335" y="288" width="9" height="23" fill="#00ff00"/>
<rect x="1355" y="281" width="1" height="36" fill="#ff6347"/>
<rect x="1350" y="311" width="11" height="2" fill="#ff6347"/>
<rect x="1371" y="294" width="1" height="21" fill="#00ff7f"/>
<rect x="1366" y="310" width="11" height="3" fill="#00ff7f"/>
<rect x="1367" y="311" width="9" height="1" fill="#00ff00"/>
<rect x="1387" y="286" width="1" height="32" fill="#ff6347"/>
<rect x="1382" y="288" width="11" height="26" fill="#ff6347"/>
<rect x="1383" y="289" width="9" height="24" fill="#ff0000"/>
<rect x="1403" y="276" width="1" height="19" fill="#ff6347"/>
<rect x="1398" y="282" width="11" height="8" fill="#ff6347"/>
<rect x="1399" y="283" width="9" height="6" fill="#ff0000"/>
<rect x="1419" y="270" width="1" height="22" fill="#ff6347"/>
<rect x="1414" y="271" width="11" height="12" fill="#ff6347"/>
<rect x="1415" y="272" width="9" height="10" fill="#ff0000"/>
</g>
<g clip-path="url(#c2)" shape-rendering="crispEdges">
<g fill="#e4e4e4" shape-rendering="crispEdges">
<rect x="10" y="526" width="2" height="53"/>
<rect x="26" y="516" width="2" height="63"/>
<rect x="42" y="516" width="2" height="63"/>
<rect x="58" y="492" width="2" height="87"/>
<rect x="74" y="463" width="2" height="116"/>
<rect x="90" y="480" width="2" height="99"/>
<rect x="106" y="471" width="2" height="108"/>
<rect x="122" y="467" width="2" height="112"/>
<rect x="138" y="480" width="2" height="99"/>
<rect x="154" y="501" width="2" height="78"/>
<rect x="170" y="506" width="2" height="73"/>
<rect x="186" y="521" width="2" height="58"/>
<rect x="202" y="531" width="2" height="48"/>
<rect x="218" y="534" width="2" height="45"/>
<rect x="234" y="528" width="2" height="51"/>
<rect x="250" y="540" width="2" height="39"/>
<rect x="266" y="538" width="2" height="41"/>
<rect x="282" y="540" width="2" height="39"/>
<rect x="298" y="538" width="2" height="41"/>
<rect x="314" y="553" width="2" height="26"/>
<rect x="330" y="560" width="2" height="19"/>
<rect x="346" y="564" width="2" height="15"/>
<rect x="362" y="561" width="2" height="18"/>
<rect x="378" y="534" width="2" height="45"/>
<rect x="394" y="521" width="2" height="58"/>
<rect x="410" y="517" width="2" height="62"/>
<rect x="426" y="503" width="2" height="76"/>
<rect x="442" y="530" width="2" height="49"/>
<rect x="458" y="538" width="2" height="41"/>
<rect x="474" y="560" width="2" height="19"/>
<rect x="506" y="579" width="2" height="12"/>
<rect x="522" y="579" width="2" height="18"/>
<rect x="538" y="579" width="2" height="10"/>
<rect x="554" y="579" width="2" height="12"/>
<rect x="570" y="579" width="2" height="16"/>
<rect x="586" y="579" width="2" height="17"/>
<rect x="602" y="579" width="2" height="22"/>
<rect x="618" y="579" width="2" height="20"/>
<rect x="634" y="579" width="2" height="31"/>
<rect x="650" y="579" width="2" height="40"/>
<rect x="666" y="579" width="2" height="29"/>
<rect x="682" y="579" width="2" height="19"/>
<rect x="698" y="579" width="2" height="23"/>
<rect x="714" y="579" width="2" height="25"/>
<rect x="730" y="579" width="2" height="24"/>
<rect x="746" y="579" width="2" height="23"/>
<rect x="762" y="579" width="2" height="27"/>
<rect x="778" y="579" width="2" height="17"/>
<rect x="794" y="579" width="2" height="5"/>
<rect x="810" y="579" width="2" height="2"/>
<rect x="826" y="572" width="2" height="7"/>
<rect x="842" y="548" width="2" height="31"/>
<rect x="858" y="555" width="2" height="24"/>
<rect x="874" y="568" width="2" height="11"/>
<rect x="890" y="573" width="2" height="6"/>
<rect x="906" y="577" width="2" height="2"/>
<rect x="922" y="579" width="2" height="13"/>
<rect x="938" y="579" width="2" height="21"/>
<rect x="954" y="579" width="2" height="14"/>
<rect x="970" y="579" width="2" height="22"/>
<rect x="986" y="579" width="2" height="25"/>
<rect x="1002" y="579" width="2" height="44"/>
<rect x="1018" y="579" width="2" height="40"/>
<rect x="1034" y="579" width="2" height="39"/>
<rect x="1050" y="579" width="2" height="41"/>
<rect x="1066" y="579" width="2" height="35"/>
<rect x="1082" y="579" width="2" height="37"/>
<rect x="1098" y="579" width="2" height="31"/>
<rect x="1114" y="579" width="2" height="29"/>
<rect x="1130" y="579" width="2" height="32"/>
<rect x="1146" y="579" width="2" height="30"/>
<rect x="1162" y="579" width="2" height="29"/>
<rect x="1178" y="579" width="2" height="21"/>
<rect x="1194" y="579" width="2" height="5"/>
<rect x="1210" y="579" width="2" height="4"/>
<rect x="1226" y="579" width="2" height="20"/>
<rect x="1242" y="579" width="2" height="29"/>
<rect x="1258" y="579" width="2" height="29"/>
<rect x="1274" y="579" width="2" height="29"/>
<rect x="1290" y="579" width="2" height="35"/>
<rect x="1306" y="579" width="2" height="30"/>
<rect x="1322" y="579" width="2" height="28"/>
<rect x="1338" y="579" width="2" height="38"/>
<rect x="1354" y="579" width="2" height="40"/>
<rect x="1370" y="579" width="2" height="39"/>
<rect x="1386" y="579" width="2" height="22"/>
<rect x="1402" y="579" width="2" height="11"/>
</g>
<polyline points="0.0,550.9 11.0,525.6 27.0,516.3 43.0,515.6 59.0,491.6 75.0,463.3 91.0,479.5 107.0,471.4 123.0,466.6 139.0,480.3 155.0,501.2 171.0,506.0 187.0,520.6 203.0,531.2 219.0,534.5 235.0,527.7 251.0,540.0 267.0,538.3 283.0,539.5 299.0,538.3 315.0,553.4 331.0,560.4 347.0,563.5 363.0,561.0 379.0,534.5 395.0,521.4 411.0,516.8 427.0,503.0 443.0,530.2 459.0,538.3 475.0,559.7 491.0,579.1 507.0,591.2 523.0,597.0 539.0,589.2 555.0,591.2 571.0,595.0 587.0,596.2 603.0,601.3 619.0,598.8 635.0,610.1 651.0,618.9 667.0,608.3 683.0,597.5 699.0,602.0 715.0,603.8 731.0,603.3 747.0,602.5 763.0,606.3 779.0,596.2 795.0,583.6 811.0,581.1 827.0,572.3 843.0,547.6 859.0,554.6 875.0,568.5 891.0,573.0 907.0,577.3 923.0,592.0 939.0,599.5 955.0,593.0 971.0,601.3 987.0,604.3 1003.0,622.7 1019.0,619.4 1035.0,618.4 1051.0,619.7 1067.0,613.9 1083.0,615.9 1099.0,610.1 1115.0,607.6 1131.0,610.9 1147.0,609.4 1163.0,607.6 1179.0,600.0 1195.0,584.4 1211.0,583.1 1227.0,598.8 1243.0,607.6 1259.0,608.3 1275.0,607.6 1291.0,614.4 1307.0,608.8 1323.0,606.8 1339.0,617.2 1355.0,619.4 1371.0,617.7 1387.0,601.3 1403.0,589.9 1419.0,578.6" fill="none" stroke="#fff" stroke-width="1"/>
<polyline points="0.0,557.9 11.0,553.4 27.0,535.7 43.0,519.3 59.0,506.7 75.0,491.6 91.0,479.8 107.0,472.7 123.0,471.4 139.0,473.4 155.0,482.8 171.0,495.4 187.0,506.7 203.0,516.8 219.0,528.2 235.0,529.4 251.0,533.7 267.0,535.2 283.0,538.3 299.0,538.3 315.0,544.6 331.0,552.1 347.0,559.7 363.0,561.0 379.0,552.1 395.0,535.7 411.0,521.9 427.0,514.3 443.0,516.0 459.0,523.0 475.0,540.8 491.0,557.2 507.0,573.5 523.0,588.7 539.0,592.5 555.0,591.7 571.0,593.2 587.0,594.5 603.0,597.5 619.0,597.0 635.0,603.3 651.0,609.6 667.0,611.4 683.0,607.6 699.0,602.5 715.0,601.3 731.0,602.5 747.0,602.5 763.0,605.0 779.0,601.3 795.0,595.0 811.0,587.4 827.0,578.6 843.0,567.2 859.0,558.4 875.0,556.7 891.0,563.5 907.0,572.3 923.0,579.9 939.0,588.7 955.0,593.7 971.0,596.2 987.0,598.8 1003.0,608.9 1019.0,616.4 1035.0,619.4 1051.0,619.4 1067.0,617.2 1083.0,616.4 1099.0,613.4 1115.0,611.4 1131.0,610.1 1147.0,609.4 1163.0,608.8 1179.0,605.0 1195.0,597.5 1211.0,589.9 1227.0,588.7 1243.0,596.2 1259.0,602.5 1275.0,606.8 1291.0,610.9 1307.0,610.9 1323.0,610.1 1339.0,611.4 1355.0,615.2 1371.0,617.7 1387.0,612.6 1403.0,603.8 1419.0,591.2" fill="none" stroke="#d01030" stroke-width="1" stroke-dasharray="3,3"/>
</g>
<g clip-path="url(#c3)" shape-rendering="crispEdges">
<line x1="-2" y1="668.5" x2="1432" y2="668.5" stroke="#ececec" stroke-width="1" stroke-dasharray="3,3" shape-rendering="crispEdges"/>
<line x1="-2" y1="773.5" x2="1432" y2="773.5" stroke="#ececec" stroke-width="1" stroke-dasharray="3,3" shape-rendering="crispEdges"/>
<polyline points="0.0,710.7 11.0,684.2 27.0,664.0 43.0,662.3 59.0,657.2 75.0,652.2 91.0,664.8 107.0,667.3 123.0,669.6 139.0,662.0 155.0,684.2 171.0,708.2 187.0,730.9 203.0,740.9 219.0,756.1 235.0,705.6 251.0,695.6 267.0,686.0 283.0,694.3 299.0,676.1 315.0,705.6 331.0,730.9 347.0,755.3 363.0,746.0 379.0,710.7 395.0,688.5 411.0,676.6 427.0,669.0 443.0,688.5 459.0,706.9 475.0,751.0 491.0,773.7 507.0,795.2 523.0,805.2 539.0,790.0 555.0,776.2 571.0,758.6 587.0,772.5 603.0,775.0 619.0,757.3 635.0,755.3 651.0,767.4 667.0,759.9 683.0,737.2 699.0,720.3 715.0,737.2 731.0,767.4 747.0,770.3 763.0,775.5 779.0,751.8 795.0,704.4 811.0,664.0 827.0,657.2 843.0,663.3 859.0,679.2 875.0,705.6 891.0,737.2 907.0,767.4 923.0,790.6 939.0,799.4 955.0,783.8 971.0,778.3 987.0,768.2 1003.0,790.6 1019.0,780.0 1035.0,778.3 1051.0,774.5 1067.0,774.5 1083.0,782.5 1099.0,776.2 1115.0,775.7 1131.0,756.0 1147.0,725.8 1163.0,717.0 1179.0,690.5 1195.0,670.3 1211.0,662.3 1227.0,696.8 1243.0,747.2 1259.0,769.9 1275.0,754.3 1291.0,754.3 1307.0,748.5 1323.0,747.2 1339.0,744.7 1355.0,766.2 1371.0,779.3 1387.0,744.7 1403.0,700.6 1419.0,655.2" fill="none" stroke="#5ec8b6" stroke-width="1"/>
<polyline points="0.0,696.8 11.0,701.9 27.0,690.5 43.0,670.3 59.0,661.5 75.0,657.2 91.0,658.2 107.0,660.8 123.0,667.3 139.0,666.6 155.0,671.6 171.0,684.2 187.0,707.7 203.0,727.0 219.0,743.5 235.0,732.1 251.0,719.5 267.0,696.8 283.0,691.8 299.0,685.0 315.0,692.5 331.0,705.6 347.0,729.6 363.0,744.7 379.0,738.4 395.0,718.3 411.0,695.6 427.0,679.9 443.0,677.4 459.0,690.5 475.0,720.8 491.0,746.0 507.0,771.2 523.0,787.6 539.0,797.7 555.0,791.4 571.0,777.5 587.0,769.4 603.0,768.7 619.0,768.2 635.0,762.9 651.0,759.9 667.0,761.1 683.0,753.6 699.0,738.4 715.0,730.9 731.0,740.9 747.0,756.7 763.0,768.2 779.0,766.2 795.0,748.5 811.0,713.2 827.0,679.2 843.0,660.8 859.0,667.3 875.0,683.5 891.0,710.7 907.0,740.9 923.0,767.4 939.0,787.1 955.0,791.9 971.0,787.6 987.0,777.5 1003.0,779.3 1019.0,779.3 1035.0,782.0 1051.0,778.8 1067.0,775.0 1083.0,777.0 1099.0,777.5 1115.0,777.0 1131.0,769.9 1147.0,751.0 1163.0,732.1 1179.0,710.7 1195.0,693.0 1211.0,674.9 1227.0,676.6 1243.0,698.0 1259.0,730.9 1275.0,753.6 1291.0,759.4 1307.0,753.6 1323.0,750.3 1339.0,747.2 1355.0,753.6 1371.0,762.4 1387.0,762.9 1403.0,746.0 1419.0,703.1" fill="none" stroke="#d01028" stroke-width="1" stroke-dasharray="3,3"/>
</g>
</svg>
<div id="labels">
<div class="lb" style="left:1440px;top:72px;">1.13635</div>
<div class="lb" style="left:1440px;top:123px;">1.13580</div>
<div class="lb" style="left:1440px;top:173px;">1.13525</div>
<div class="lb" style="left:1440px;top:224px;">1.13470</div>
<div class="lb" style="left:1440px;top:274px;">1.13415</div>
<div class="lb" style="left:1440px;top:325px;">1.13360</div>
<div class="lb" style="left:1440px;top:375px;">1.13305</div>
<div class="lb" style="left:1440px;top:426px;">1.13250</div>
<div class="lb" style="left:1436px;top:458px;">0.000906</div>
<div class="lb" style="left:1436px;top:572px;">0.00</div>
<div class="lb" style="left:1436px;top:613px;">-0.000366</div>
<div class="lb" style="left:1436px;top:635px;">100</div>
<div class="lb" style="left:1436px;top:661px;">80</div>
<div class="lb" style="left:1436px;top:766px;">20</div>
<div class="lb" style="left:1436px;top:791px;">0</div>
<div class="lb" style="left:-22px;top:813px;">18 Aug 20:35</div>
<div class="lb" style="left:74px;top:813px;">18 Aug 21:05</div>
<div class="lb" style="left:170px;top:813px;">18 Aug 21:35</div>
<div class="lb" style="left:266px;top:813px;">18 Aug 22:05</div>
<div class="lb" style="left:362px;top:813px;">18 Aug 22:35</div>
<div class="lb" style="left:458px;top:813px;">18 Aug 23:05</div>
<div class="lb" style="left:554px;top:813px;">18 Aug 23:35</div>
<div class="lb" style="left:650px;top:813px;">19 Aug 00:05</div>
<div class="lb" style="left:746px;top:813px;">19 Aug 00:35</div>
<div class="lb" style="left:842px;top:813px;">19 Aug 01:05</div>
<div class="lb" style="left:938px;top:813px;">19 Aug 01:35</div>
<div class="lb" style="left:1034px;top:813px;">19 Aug 02:05</div>
<div class="lb" style="left:1130px;top:813px;">19 Aug 02:35</div>
<div class="lb" style="left:1226px;top:813px;">19 Aug 03:05</div>
<div class="lb" style="left:1322px;top:813px;">19 Aug 03:35</div>
<div class="lb" style="left:1418px;top:813px;">19 Aug 04:05</div>
</div>
<!-- right edge strip -->
<div style="position:absolute;left:1500px;top:33px;width:3px;height:802px;background:#fafafa"></div>
<div style="position:absolute;left:1503px;top:33px;width:4px;height:802px;background:#a8a8a8"></div>
<!-- orange bubble -->
<div style="position:absolute;left:1496px;top:30.500px;width:77px;height:77px;border-radius:50%;background:#f39a14"></div>
<!-- bottom lines -->
<div style="position:absolute;left:0;top:835px;width:1507px;height:2px;background:#fff"></div>
<div style="position:absolute;left:0;top:837px;width:1507px;height:1px;background:#111"></div>
<div id="status">
<div style="position:absolute;left:17px;top:2px;width:1px;height:24px;background:#555"></div>
<div style="position:absolute;left:20px;top:2px;width:2px;height:24px;background:#f8f8f8"></div>
</div>
<div id="wm">www.fx110.com</div>
<svg width="60" height="20" style="position:absolute;left:1447px;top:840px"><polygon points="20,6 16.500,10 20,14" fill="#a6a6a6"/><polygon points="44,5.200 48.800,10 44,14.800" fill="#a6a6a6"/></svg>
</div>
</body>
</html>
